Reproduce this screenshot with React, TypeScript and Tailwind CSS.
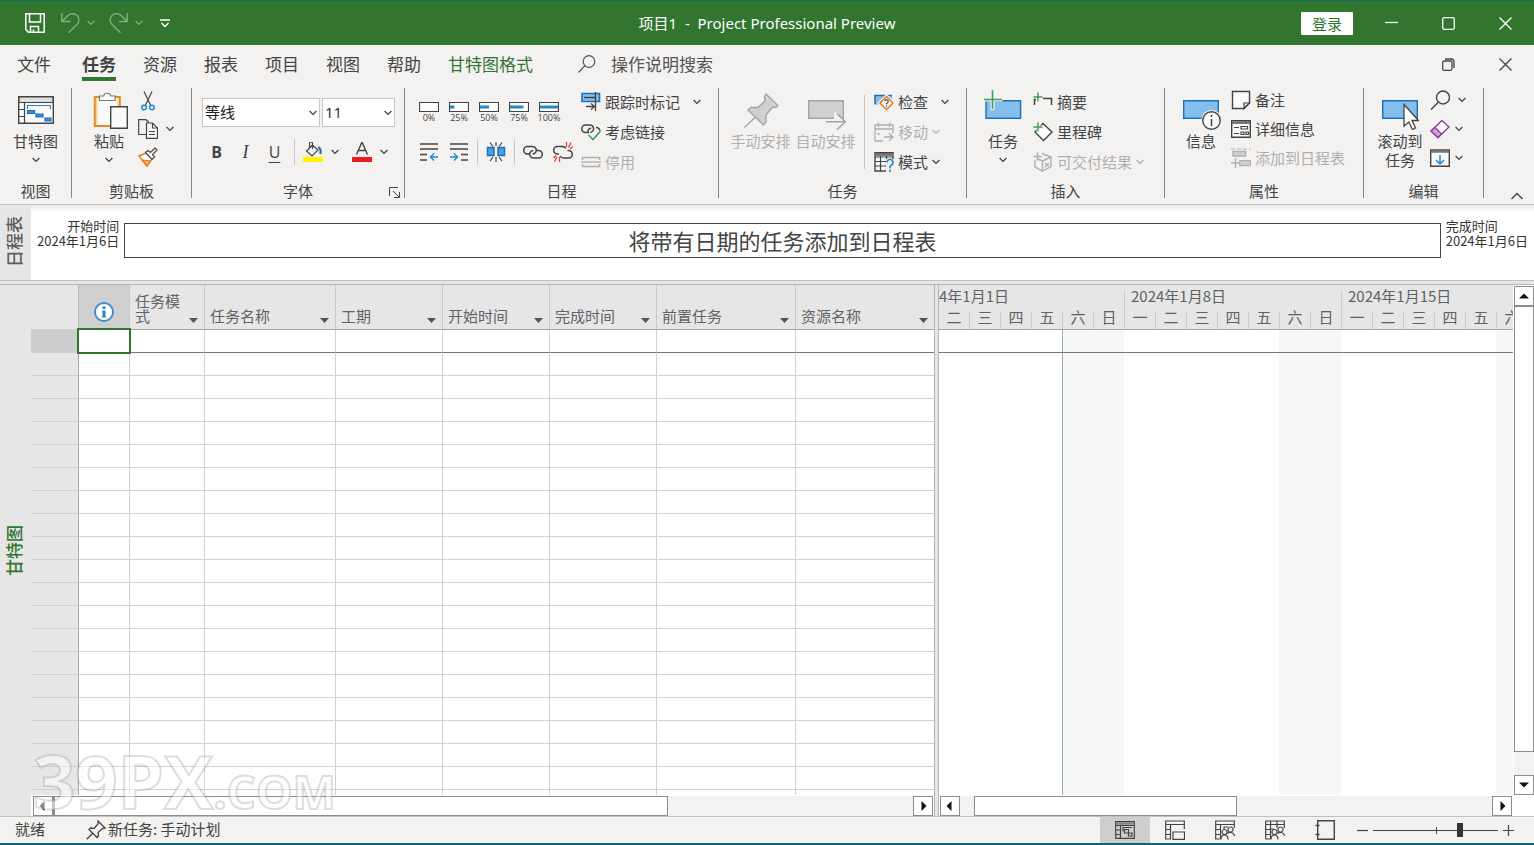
import { useState } from "react";
import type { ReactNode } from "react";

const COLUMNS = [
  { name: "任务模式", width: "w-[75px]" },
  { name: "任务名称", width: "w-[131px]" },
  { name: "工期", width: "w-[107px]" },
  { name: "开始时间", width: "w-[107px]" },
  { name: "完成时间", width: "w-[107px]" },
  { name: "前置任务", width: "w-[139px]" },
  { name: "资源名称", width: "w-[139px]" },
];
const ROWS = Array.from({ length: 60 }, (_, i) => i);
const DAYS = ["一", "二", "三", "四", "五", "六", "日"];
const WEEKS = ["2024年1月1日", "2024年1月8日", "2024年1月15日", "2024年1月22日", "2024年1月29日", "2024年2月5日"];

/* ---------- small shared pieces ---------- */

function Chevron({ className = "" }: { className?: string }) {
  return (
    <svg className={`shrink-0 ${className}`} width="8" height="6" viewBox="0 0 8 6" fill="none" stroke="currentColor" strokeWidth="1.3">
      <path d="M.6 1 4 4.4 7.400 1" />
    </svg>
  );
}

function Group({ label, width, children, launcher }: { label: string; width: string; children: ReactNode; launcher?: boolean }) {
  return (
    <section aria-label={label} className={`flex h-[110px] shrink-0 flex-col border-r border-[#8a8886] ${width}`}>
      <div className="flex flex-1 items-start">{children}</div>
      <div className="relative h-4 text-center leading-[18px]">
        {label}
        {launcher && (
          <button aria-label="字体设置" className="absolute right-1 bottom-0 flex">
            <svg width="11" height="11" viewBox="0 0 11 11" fill="none" stroke="#444">
              <path d="M.5 9V.5H9M4 4l6 6M10.500 5v5.500H5" />
            </svg>
          </button>
        )}
      </div>
    </section>
  );
}

function Large({ icon, label, chevron, disabled, className = "" }: { icon: ReactNode; label: ReactNode; chevron?: boolean; disabled?: boolean; className?: string }) {
  return (
    <button disabled={disabled} className={`flex shrink-0 flex-col items-center pt-0.5 leading-[19px] disabled:text-[#b1afad] ${className}`}>
      <span className="mb-px flex h-10 items-center justify-center">{icon}</span>
      <span>{label}</span>
      {chevron && <Chevron className="mt-[7px]" />}
    </button>
  );
}

function Small({ icon, label, chevron = "", disabled }: { icon: ReactNode; label?: string; chevron?: string; disabled?: boolean }) {
  return (
    <button disabled={disabled} aria-label={label} className="flex h-5 items-center leading-5 whitespace-nowrap disabled:text-[#b1afad]">
      {icon}
      {label && <span className="ml-1">{label}</span>}
      {chevron && <Chevron className={chevron} />}
    </button>
  );
}

function Divider({ className = "" }: { className?: string }) {
  return <span className={`w-px shrink-0 bg-[#c8c6c4] ${className}`} />;
}

function S({ children, w = 20, h = 20 }: { children: ReactNode; w?: number; h?: number }) {
  return (
    <svg className="shrink-0" width={w} height={h} viewBox={`0 0 ${w} ${h}`} fill="none" stroke="#444" strokeWidth="1.2">
      {children}
    </svg>
  );
}

/* ---------- title bar and tabs ---------- */

function TitleBar() {
  return (
    <header className="grid h-[45px] shrink-0 grid-cols-[1fr_auto_1fr] items-center border-t border-[#116a6c] bg-[#31752f] text-white">
      <div className="flex items-center pl-[25px]">
        <button aria-label="保存">
          <svg width="20" height="20" viewBox="0 0 20 20" fill="none" stroke="#fff" strokeWidth="1.5">
            <path d="M.8.8h18.400v18.400H3.500L.8 16.500zM4.500 1v8h11V1M5.500 19v-5.500h8V19M8.500 19v-2.500" />
          </svg>
        </button>
        <button aria-label="撤消" className="ml-4 text-[#7fb27d]">
          <svg width="19" height="20" viewBox="0 0 19 20" fill="none" stroke="currentColor" strokeWidth="1.4">
            <path d="M.8 0v8.500h8.500M1 8.300 7 2.500a6.300 6.300 0 0 1 9 9L7.500 19.800" />
          </svg>
        </button>
        <Chevron className="ml-[7px] text-[#7fb27d]" />
        <button aria-label="恢复" className="ml-3.5 text-[#7fb27d]">
          <svg width="19" height="20" viewBox="0 0 19 20" fill="none" stroke="currentColor" strokeWidth="1.4">
            <path d="M18.200 0v8.500H9.700M18 8.300 12 2.500a6.300 6.300 0 0 0-9 9l8.500 8.300" />
          </svg>
        </button>
        <Chevron className="ml-[7px] text-[#7fb27d]" />
        <button aria-label="自定义快速访问工具栏" className="ml-[17px]">
          <svg width="10" height="9" viewBox="0 0 10 9" fill="none" stroke="#fff" strokeWidth="1.4">
            <path d="M0 1h10M1.500 4 5 7.500 8.500 4" />
          </svg>
        </button>
      </div>
      <h1 className="font-['Noto_Sans','Noto_Sans_CJK_SC',sans-serif] text-[15px] whitespace-pre">项目1  -  Project Professional Preview</h1>
      <div className="flex items-center justify-end pr-[22px]">
        <button className="mr-8 h-[23px] w-[52px] rounded-[1px] bg-white text-[15px] leading-[23px] text-[#31752f]">登录</button>
        <button aria-label="最小化">
          <svg width="13" height="13" viewBox="0 0 13 13" fill="none" stroke="#fff" strokeWidth="1.300"><path d="M0 5.500h13" /></svg>
        </button>
        <button aria-label="最大化" className="ml-11">
          <svg width="13" height="13" viewBox="0 0 13 13" fill="none" stroke="#fff" strokeWidth="1.300"><rect x=".7" y=".7" width="11.600" height="11.600" rx="1.500" /></svg>
        </button>
        <button aria-label="关闭" className="ml-11">
          <svg width="13" height="13" viewBox="0 0 13 13" fill="none" stroke="#fff" strokeWidth="1.300"><path d="m.5.5 12 12M12.500.5l-12 12" /></svg>
        </button>
      </div>
    </header>
  );
}

function Tabs() {
  return (
    <nav className="flex h-10 shrink-0 items-center bg-[#f3f2f1] pb-0.5 pl-[17px] text-[17px] leading-6">
      <button className="mr-[31px]">文件</button>
      <div className="flex gap-[27px]">
        <button className="relative font-bold after:absolute after:inset-x-0 after:-bottom-[5px] after:h-1 after:bg-[#31752f]">任务</button>
        <button>资源</button>
        <button>报表</button>
        <button>项目</button>
        <button>视图</button>
        <button>帮助</button>
        <button className="text-[#31752f]">甘特图格式</button>
      </div>
      <label className="ml-[45px] flex items-center">
        <svg width="18" height="18" viewBox="0 0 18 18" fill="none" stroke="#555" strokeWidth="1.200"><circle cx="11" cy="6.500" r="5.800" /><path d="M7 10.700.5 17.500" /></svg>
        <input type="text" aria-label="操作说明搜索" placeholder="操作说明搜索" className="ml-[15px] w-[140px] bg-transparent outline-none placeholder:text-[#555]" />
      </label>
      <div className="ml-auto flex items-center gap-11 pr-[22px]">
        <button aria-label="还原文档窗口">
          <svg width="13" height="13" viewBox="0 0 13 13" fill="none" stroke="#444" strokeWidth="1.300"><rect x=".7" y="3" width="9.300" height="9.300" rx="1.500" /><path d="M3 1h6a3 3 0 0 1 3 3v6" /></svg>
        </button>
        <button aria-label="关闭文档">
          <svg width="13" height="13" viewBox="0 0 13 13" fill="none" stroke="#444" strokeWidth="1.300"><path d="m.5.5 12 12M12.500.5l-12 12" /></svg>
        </button>
      </div>
    </nav>
  );
}

/* ---------- ribbon icons ---------- */

const GanttIcon = (
  <S w={36} h={28}>
    <path d="M.7.7h34.600v26.600H.7z" fill="#fafafa" strokeWidth="1.400" />
    <path d="M1 1h34v5.500H1z" fill="#e1dfdd" />
    <path d="M6.500 6v21M1 13.500h5.500M1 20.500h5.500" />
    <path d="M9.500 13V9.500h23V13" stroke="#1e8bcd" />
    <path d="M9.500 14.500h7v3h-7zM18 18h7v3h-7zM27 22h6v3h-6z" stroke="#1e6fb8" fill="#3b8fd6" />
  </S>
);
const PasteIcon = (
  <S w={38} h={38}>
    <g transform="translate(3 0)">
      <path d="M1.800 6h25v29h-25z" fill="#fafafa" stroke="#e48a25" strokeWidth="2" />
      <path d="M3.700 7.500v26M25 7.500V15" stroke="#fbd28a" strokeWidth="1.500" />
      <path d="M6.500 9.500V5h4a4 4 0 0 1 7.600 0h4v4.500z" fill="#fafafa" stroke="#777" />
      <path d="M17.700 15.700h16.600v21.600H17.700z" fill="#fafafa" strokeWidth="1.400" />
    </g>
  </S>
);
const ScissorsIcon = (
  <S>
    <path d="M6 .5 12.500 14M14 .5 7.500 14" />
    <circle cx="6" cy="16.500" r="2.300" stroke="#1e8bcd" strokeWidth="1.500" />
    <circle cx="14" cy="16.500" r="2.300" stroke="#1e8bcd" strokeWidth="1.500" />
  </S>
);
const CopyIcon = (
  <S>
    <path d="M8 15.500H.7V.7H8L11 3.500" />
    <path d="M8.500 4h6l5 5v10.300h-11z" fill="#fafafa" />
    <path d="M14.500 4v5h5M11 12.500h6M11 15.500h6" />
  </S>
);
const BrushIcon = (
  <S>
    <path d="m1 9 7-3 6 6-5 7z" fill="#fff" stroke="#e07b1f" strokeWidth="1.400" />
    <path d="M4 13 12.500 14 9 19z" stroke="#e07b1f" fill="#f6b26b" />
    <path d="m7.500 5.500 2.500-2 2.500 2L17 1l2 2-4.500 4.500 2 2.500-2.500 2.500z" fill="#fafafa" />
  </S>
);
const BucketIcon = (
  <S>
    <path d="M9.500 3 3.500 9l5.500 5 6-6zM9.500 7V1.500a1.500 1.500 0 0 0-3 0V6" />
    <path d="M15 5.500c2 0 3 2 2.500 6.500" stroke="#2b6ca8" strokeWidth="2.200" />
    <path d="M0 15h20v5H0z" fill="#fff200" stroke="none" />
  </S>
);
const FontColorIcon = (
  <S>
    <path d="M4.500 12.500 9.700.8h.6l5.200 11.700M6.300 8.500h7.400" strokeWidth="1.400" />
    <path d="M0 15h20v5H0z" fill="#e81b23" stroke="none" />
  </S>
);

function ProgressIcon({ value }: { value: number }) {
  return (
    <S h={10}>
      <path d="M.5.500h19v9H.5z" fill="#fff" strokeWidth="1.200" />
      {value > 0 && <path d={`M1 5h${(value * 18) / 100}`} stroke="#1e8bcd" strokeWidth="3" />}
    </S>
  );
}

const OutdentIcon = (
  <S><path d="M1 2h18M1 7h18M1 12.500h7M1 18h7" strokeWidth="1.300" /><path d="M19 15h-7.500m3.500-3.500L11.500 15l3.500 3.500" stroke="#1e8bcd" strokeWidth="1.500" /></S>
);
const IndentIcon = (
  <S><path d="M1 2h18M1 7h18M12 12.500h7M12 18h7" strokeWidth="1.300" /><path d="M1 15h7.500M5 11.500 8.500 15 5 18.500" stroke="#1e8bcd" strokeWidth="1.500" /></S>
);
const SplitIcon = (
  <S>
    <path d="M1.500 5.500h6.500v8H1.500zM12 5.500h6.500v8H12z" fill="#4f9fdd" stroke="#1e6fb8" strokeWidth="1.500" />
    <path d="M10 0v4M10 15v5M4 .5l3 4M16 .5l-3 4M4 19l3-4M16 19l-3-4" />
  </S>
);
const LinkIcon = (
  <S>
    <path d="M6.500 12H4.500a3.800 3.800 0 0 1 0-7.600h5a3.800 3.800 0 0 1 3.200 5.800M10 15.500M13.500 8.400h2a3.800 3.800 0 0 1 0 7.600h-5a3.800 3.800 0 0 1-3.200-5.800q1-1.800 3-1.800M12.700 10.200q-1 1.800-3 1.800" strokeWidth="1.500" />
  </S>
);
const UnlinkIcon = (
  <S>
    <path d="M6 12H4.500a3.800 3.800 0 0 1 0-7.600h5a3.800 3.800 0 0 1 3.300 2M14.500 8.400h1a3.800 3.800 0 0 1 0 7.600h-5a3.800 3.800 0 0 1-3.300-2" strokeWidth="1.500" />
    <path d="M13.500 5V0M15.500 5.500 18 .5M17 7l3-2.500M6.500 15v5M4 15l-2.500 4.500M3 13.500.5 16" stroke="#e03a3e" strokeWidth="1.300" />
  </S>
);
const TrackIcon = (
  <S>
    <path d="M1 1.500h17.500v8H1z" fill="#83beec" stroke="#1e6fb8" strokeWidth="1.600" />
    <path d="M3 5.500h12M14.500 0v19M5 14.500h8M10 11.500l3.500 3-3.500 3" strokeWidth="1.300" />
  </S>
);
const LinksCheckIcon = (
  <S>
    <path d="M6 10.500H4.500a3.700 3.700 0 0 1 0-7.500h4.500a3.700 3.700 0 0 1 3.300 5.300q-1 2-3 2.200M7.500 11.500c-1.500-2.500 0-5.200 2.700-5.200M15 5.500c2 0 3.500 1.200 4 3" strokeWidth="1.500" />
    <path d="m7.500 13 4.500 4.500L19.500 9" stroke="#3ba05a" strokeWidth="1.600" />
  </S>
);
const InactiveIcon = (
  <S><path d="M1.500 8V5.500h17V8M1.500 12v2.500h17V12" stroke="#b1afad" strokeWidth="1.500" /><path d="M0 10h20" stroke="#b1afad" strokeWidth="1.400" /></S>
);
const PinLargeIcon = (
  <S w={36} h={36}>
    <path d="M23 2 35 13.500l-2 2-3.500-.5-6.500 8 0 7-2.500 3L5 18l3-2.500h7l7-6.500-.5-4.500z" fill="#d2d0ce" stroke="#a6a4a2" strokeWidth="1.400" />
    <path d="M12.500 25 1.500 35.500" stroke="#a6a4a2" strokeWidth="1.400" />
  </S>
);
const AutoIcon = (
  <S w={40} h={40}>
    <path d="M2.700 10.700h34.600v17.600H2.700z" fill="#d2d0ce" stroke="#a6a4a2" strokeWidth="1.400" />
    <path d="m29 23 10 8.700L29 40z" fill="#f3f2f1" stroke="#f3f2f1" strokeWidth="2" />
    <path d="M20 31.700h19M31 23.500l8.200 8.200-8.200 8" stroke="#a6a4a2" strokeWidth="1.500" />
  </S>
);
const InspectIcon = (
  <S>
    <path d="M1 3.500h17v7L8 12.500H1z" fill="#83beec" stroke="none" />
    <path d="M1 12.500v-9h17" stroke="#1e6fb8" strokeWidth="1.500" />
    <path d="m12.500 4.500 6.500 6.500-6.500 6.500L6 11z" fill="#fafafa" stroke="#f3f2f1" strokeWidth="4" />
    <path d="m12.500 4.500 6.500 6.500-6.500 6.500L6 11z" fill="#fafafa" stroke="#e07b1f" strokeWidth="1.500" />
    <path d="M10.800 9.200a1.700 1.700 0 1 1 2.400 1.800l-.7.700v.8M12.500 13.500v1.200" />
  </S>
);
const MoveIcon = (
  <S>
    <path d="M9 19H1V3h18v8M1 7h18M4.500.5V5M15.500.5V5M10 15h8.500M15 11l4 4-4 4" stroke="#b1afad" strokeWidth="1.300" />
    <path d="M3.500 11h2v2h-2z" fill="#b1afad" stroke="none" />
  </S>
);
const ModeIcon = (
  <S>
    <path d="M1 1h18v18H1z" fill="#fafafa" strokeWidth="1.400" />
    <path d="M1 2.500h18" stroke="#777" strokeWidth="3" /><path d="M.5.7h19M6.500 4v15M12.500 4v15M1 5h18M1 9.500h18M1 14h18" />
    <path d="M12 7h8v13h-8z" fill="#f3f2f1" stroke="none" />
    <path d="M13 10.500a3 3 0 1 1 4.500 2.500l-1.500 1.500v1.800M16 17.500V20" stroke="#1e8bcd" strokeWidth="1.600" />
  </S>
);
const TaskIcon = (
  <S w={38} h={40}>
    <path d="M2 10.700h34.600v17.600H2z" fill="#83beec" stroke="#1e6fb8" strokeWidth="1.400" />
    <path d="M8.500 0v20M0 9.500h18.500" stroke="#f3f2f1" strokeWidth="4" />
    <path d="M8.500 0v19M0 9.500h18" stroke="#3ba05a" strokeWidth="1.600" />
  </S>
);
const SummaryIcon = (
  <S><path d="M1.500 13V7.500H3M10 6.500h8.500V13" strokeWidth="1.500" /><path d="M5 .5v9M.5 5h9" stroke="#3ba05a" strokeWidth="1.400" /></S>
);
const MilestoneIcon = (
  <S><path d="m10 1.500 9 8.500-8.500 8.500L2 10z" fill="#fff" strokeWidth="1.400" /><path d="M5 0v10M0 5h10" stroke="#f3f2f1" strokeWidth="3" /><path d="M5 .5v9M.5 5h9" stroke="#3ba05a" strokeWidth="1.400" /></S>
);
const DeliverableIcon = (
  <S><path d="M9 1.500 18 5v9.500L9.500 19 2 15V8M18 5 9.500 9v10M9.500 9 5 7M12 11l4 3M12 15l4-4M4.500.5v8M.5 4.500h8" stroke="#b1afad" strokeWidth="1.400" /></S>
);
const InfoLargeIcon = (
  <S w={40} h={40}>
    <path d="M2.700 10.700h34.600v17.600H2.700z" fill="#83beec" stroke="#1e6fb8" strokeWidth="1.400" />
    <circle cx="30.500" cy="30.500" r="9.500" fill="#fafafa" stroke="#f3f2f1" strokeWidth="2" />
    <circle cx="30.500" cy="30.500" r="8.700" fill="#fafafa" strokeWidth="1.400" />
    <path d="M30.500 29v7M30.500 25v2" strokeWidth="1.500" />
  </S>
);
const NoteIcon = (
  <S><path d="M1.500 1.500h17V13l-5.500 5.500H1.500z" fill="#fafafa" strokeWidth="1.400" /><path d="M18.500 13H13v5.500z" /></S>
);
const DetailsIcon = (
  <S>
    <path d="M.7 1.700h18.600v16.600H.7z" fill="#fafafa" strokeWidth="1.400" /><path d="M1 3.500h18" stroke="#777" strokeWidth="3" />
    <path d="M3 8.500h5M3 14.500h5M10 7.500h6.500v2.500H10zM10 13h3v2.500h-3zM15 13h2.500v2.500H15z" />
  </S>
);
const AddTimelineIcon = (
  <S>
    <path d="M0 1h20" strokeDasharray="4 2" stroke="#b1afad" /><path d="M2 3.500h12.500V8H2z" fill="#d2d0ce" stroke="#b1afad" strokeWidth="1.400" />
    <path d="M4.500 10v10M0 15h9" stroke="#b1afad" strokeWidth="1.500" /><path d="M8.700 12.700h10.600v5H8.700z" fill="#d2d0ce" stroke="#b1afad" />
  </S>
);
const ScrollTaskIcon = (
  <S w={38} h={40}>
    <path d="M1.700 10.700h34.600v17.600H1.700z" fill="#83beec" stroke="#1e6fb8" strokeWidth="1.400" />
    <path d="M23 14.500v21.500l4.800-4 3.700 7.500 3-1.500-3.500-7.500h6.500z" fill="#fff" strokeWidth="1.300" />
  </S>
);
const FindIcon = <S><circle cx="13" cy="7.500" r="6.500" strokeWidth="1.400" /><path d="M8.500 12 1 19.500" strokeWidth="1.400" /></S>;
const EraserIcon = (
  <S><path d="m12 1.500 7 6.500L8 18.500 1 12z" fill="#fff" stroke="#8e3b9e" strokeWidth="1.400" /><path d="M5 8.500 11.500 15 8 18.500 1 12z" fill="#d59fdc" stroke="#8e3b9e" strokeWidth="1.400" /></S>
);
const FillIcon = (
  <S><path d="M.7 2h18.600v16.300H.7z" fill="#fafafa" strokeWidth="1.400" /><path d="M1 3.500h18" stroke="#777" strokeWidth="2.500" /><path d="M10 7v9M6 12l4 4 4-4" stroke="#1e8bcd" strokeWidth="1.500" /></S>
);

/* ---------- ribbon ---------- */

function FontSelect({ label, options, width }: { label: string; options: string[]; width: string }) {
  return (
    <div className={`relative ${width}`}>
      <select aria-label={label} className="h-[29px] w-full appearance-none border border-[#c8c6c4] bg-white pl-0.5 font-['Open_Sans','Noto_Sans_CJK_SC',sans-serif] text-[15px] text-[#222]">
        {options.map((o) => <option key={o}>{o}</option>)}
      </select>
      <Chevron className="pointer-events-none absolute top-3 right-[3px]" />
    </div>
  );
}

function Ribbon() {
  const tool = "flex h-[26px] w-[30px] items-center justify-center";
  const style = "flex h-[26px] w-[29px] items-center justify-center";
  return (
    <div className="flex h-[120px] shrink-0 border-b border-[#c8c6c4] bg-[#f3f2f1] pt-[3px] text-[15px]">
      <Group label="视图" width="w-[72px]">
        <Large className="w-[71px]" icon={GanttIcon} label="甘特图" chevron />
      </Group>
      <Group label="剪贴板" width="w-[120px]">
        <Large className="ml-3.5 w-[46px]" icon={PasteIcon} label="粘贴" chevron />
        <div className="mt-[3px] ml-1.5 flex flex-col gap-2">
          <Small icon={ScissorsIcon} />
          <Small icon={CopyIcon} chevron="ml-2" />
          <Small icon={BrushIcon} />
        </div>
      </Group>
      <Group label="字体" width="w-[213px]" launcher>
        <div className="pt-2.5 pl-2.5">
          <div className="flex gap-0.5">
            <FontSelect label="字体" options={["等线", "宋体", "黑体"]} width="w-[118px]" />
            <FontSelect label="字号" options={["11", "12", "14"]} width="w-[73px]" />
          </div>
          <div className="mt-3 flex items-center font-['Open_Sans'] text-[16px] leading-6">
            <button className={`${style} font-bold`}>B</button>
            <button className={`${style} font-['Liberation_Serif'] text-[18px] italic`}>I</button>
            <button className={`${style} underline underline-offset-4`}>U</button>
            <Divider className="mr-2 ml-[5px] h-[26px]" />
            <button aria-label="背景色" className="flex items-center">{BucketIcon}<Chevron className="ml-2" /></button>
            <button aria-label="字体颜色" className="ml-[13px] flex items-center">{FontColorIcon}<Chevron className="ml-2" /></button>
          </div>
        </div>
      </Group>
      <Group label="日程" width="w-[314px]">
        <div className="pt-3 pl-[9px]">
          <div className="flex">
            {[0, 25, 50, 75, 100].map((v) => (
              <button key={v} className="flex w-[30px] flex-col items-center pt-0.5 font-['Open_Sans'] text-[9px] leading-3">
                <ProgressIcon value={v} />
                {v}%
              </button>
            ))}
          </div>
          <div className="mt-[15px] flex items-center">
            <button aria-label="升级任务" className={tool}>{OutdentIcon}</button>
            <button aria-label="降级任务" className={tool}>{IndentIcon}</button>
            <Divider className="mx-[3px] h-[26px]" />
            <button aria-label="拆分任务" className={tool}>{SplitIcon}</button>
            <Divider className="mx-[3px] h-[26px]" />
            <button aria-label="链接任务" className={tool}>{LinkIcon}</button>
            <button aria-label="取消链接任务" className={tool}>{UnlinkIcon}</button>
          </div>
        </div>
        <div className="mt-1 ml-[3px] flex flex-col gap-2.5">
          <Small icon={TrackIcon} label="跟踪时标记" chevron="ml-[13px]" />
          <Small icon={LinksCheckIcon} label="考虑链接" />
          <Small icon={InactiveIcon} label="停用" disabled />
        </div>
      </Group>
      <Group label="任务" width="w-[248px]">
        <Large className="ml-[9px] w-[65px]" icon={PinLargeIcon} label="手动安排" disabled />
        <Large className="w-[65px]" icon={AutoIcon} label="自动安排" disabled />
        <Divider className="mt-[7px] ml-1.5 h-[74px]" />
        <div className="mt-1 ml-[9px] flex flex-col gap-2.5">
          <Small icon={InspectIcon} label="检查" chevron="ml-[13px]" />
          <Small icon={MoveIcon} label="移动" chevron="ml-1" disabled />
          <Small icon={ModeIcon} label="模式" chevron="ml-1" />
        </div>
      </Group>
      <Group label="插入" width="w-[198px]">
        <Large className="ml-3 w-12" icon={TaskIcon} label="任务" chevron />
        <div className="mt-1 ml-1.5 flex flex-col gap-2.5">
          <Small icon={SummaryIcon} label="摘要" />
          <Small icon={MilestoneIcon} label="里程碑" />
          <Small icon={DeliverableIcon} label="可交付结果" chevron="ml-1" disabled />
        </div>
      </Group>
      <Group label="属性" width="w-[199px]">
        <Large className="ml-3 w-12" icon={InfoLargeIcon} label="信息" />
        <div className="mt-0.5 ml-1.5 flex flex-col gap-[9px]">
          <Small icon={NoteIcon} label="备注" />
          <Small icon={DetailsIcon} label="详细信息" />
          <Small icon={AddTimelineIcon} label="添加到日程表" disabled />
        </div>
      </Group>
      <Group label="编辑" width="w-[120px]">
        <Large className="ml-[11px] w-[50px]" icon={ScrollTaskIcon} label={<>滚动到<br />任务</>} />
        <div className="mt-0.5 ml-[5px] flex flex-col gap-[9px]">
          <Small icon={FindIcon} chevron="ml-2" />
          <Small icon={EraserIcon} chevron="ml-[5px]" />
          <Small icon={FillIcon} chevron="ml-[5px]" />
        </div>
      </Group>
      <button aria-label="折叠功能区" className="mt-auto ml-auto pr-[11px] pb-1">
        <svg width="12" height="8" viewBox="0 0 12 8" fill="none" stroke="#444" strokeWidth="1.400"><path d="m.5 7 5.500-5.500L11.500 7" /></svg>
      </button>
    </div>
  );
}

/* ---------- views ---------- */

function SideLabel({ text, className }: { text: string; className: string }) {
  return (
    <div className={`flex w-[31px] shrink-0 justify-center bg-[#e6e6e6] pr-[3px] text-[17px] leading-[22px] font-medium ${className}`}>
      <span className="rotate-180 [text-orientation:sideways] [writing-mode:vertical-rl]">{text}</span>
    </div>
  );
}

function TimelinePane() {
  return (
    <section aria-label="日程表" className="flex h-[76px] shrink-0 border-b border-[#c0c0c0] bg-white text-[13px] leading-[15px] text-[#333]">
      <SideLabel text="日程表" className="items-start pt-[11px] text-[#5c5c5c]" />
      <div className="flex min-w-0 flex-1 items-start bg-linear-to-b from-[#ebebeb] to-white to-[8px] px-1.5">
        <div className="shrink-0 pt-[13px] text-right">开始时间<br />2024年1月6日</div>
        <div className="mx-[5px] mt-[18px] h-[35px] flex-1 border border-[#444] text-center text-[22px] leading-[32px] text-[#444]">将带有日期的任务添加到日程表</div>
        <div className="shrink-0 pt-[13px]">完成时间<br />2024年1月6日</div>
      </div>
    </section>
  );
}

function ArrowButton({ dir, label }: { dir: "left" | "right" | "up" | "down"; label: string }) {
  const d = {
    left: "M6.500 0v10L1.500 5z",
    right: "M3.500 0v10L8.500 5z",
    up: "M0 7.500h10L5 2.500z",
    down: "M0 2.500h10L5 7.500z",
  }[dir];
  return (
    <button aria-label={label} className="flex h-5 w-5 shrink-0 items-center justify-center border border-[#8c8c8c] bg-white">
      <svg width="10" height="10" viewBox="0 0 10 10" fill="#111"><path d={d} /></svg>
    </button>
  );
}

function HorizontalBar({ children, className }: { children: ReactNode; className: string }) {
  return (
    <div className={`flex h-[21px] shrink-0 bg-white pt-px ${className}`}>
      <ArrowButton dir="left" label="向左滚动" />
      <div className="flex flex-1 bg-[#f2f2f2]">{children}</div>
      <ArrowButton dir="right" label="向右滚动" />
    </div>
  );
}

function TaskTable() {
  const line = "border-r border-b border-[#d0d0d0]";
  return (
    <div className="flex w-[904px] shrink-0 flex-col border-r border-[#b4b4b4]">
      <div className="min-h-0 flex-1 overflow-hidden">
        <table className="w-[904px] table-fixed border-separate border-spacing-0 text-[15px] leading-[15px] text-[#5f6368]">
          <colgroup>
            <col className="w-12" />
            <col className="w-[51px]" />
            {COLUMNS.map((c) => <col key={c.name} className={c.width} />)}
          </colgroup>
          <thead>
            <tr className="h-[45px] bg-[#e6e6e6]">
              <th aria-label="行" className="border-r border-b border-[#b4b4b4] border-b-[#d0d0d0] p-0" />
              <th aria-label="标记" className="border-r border-b border-[#c8c8c8] border-b-[#a6a6a6] bg-[#d0d0d0] p-0 align-bottom">
                <svg className="mx-auto mb-[7px]" width="20" height="20" viewBox="0 0 20 20">
                  <circle cx="10" cy="10" r="9" fill="#fff" stroke="#3a8dcb" strokeWidth="1.800" />
                  <path d="M8.500 4.500h3v2.500h-3zM8 8.500h3.500v6H12.500v1H7.500v-1h1V9.500H8z" fill="#2e84c6" />
                </svg>
              </th>
              {COLUMNS.map((c) => (
                <th key={c.name} className="border-r border-b border-[#c8c8c8] border-b-[#a6a6a6] p-0 align-bottom font-normal">
                  <div className="flex items-end justify-between pr-1.5 pb-1.5 pl-[5px] text-left">
                    <span className="min-w-0 flex-1 break-all">{c.name}</span>
                    <svg width="9" height="5" viewBox="0 0 9 5" fill="#555"><path d="M0 0h9L4.500 5z" /></svg>
                  </div>
                </th>
              ))}
            </tr>
          </thead>
          <tbody>
            {ROWS.map((r) => (
              <tr key={r} className="h-[23px]">
                <th className={`border-r border-b border-[#d0d0d0] border-r-[#a6a6a6] p-0 ${r === 0 ? "bg-[#cdcdcd]" : "bg-[#e6e6e6]"}`} />
                <td className={`p-0 ${line} ${r === 0 ? "relative border-b-[#777]" : ""}`}>
                  {r === 0 && <span className="absolute -inset-[2px] border-2 border-[#31752f]" />}
                </td>
                {COLUMNS.map((c) => <td key={c.name} className={`p-0 ${line} ${r === 0 ? "border-b-[#777]" : ""}`} />)}
              </tr>
            ))}
          </tbody>
        </table>
      </div>
      <HorizontalBar className="pr-px pl-0.5">
        <div className="w-[71.5%] border border-l-2 border-[#8c8c8c] bg-white" />
      </HorizontalBar>
    </div>
  );
}

function dayStyle(day: number, week: number) {
  if (day === 6) return "border-transparent bg-[#f7f7f7] bg-clip-padding";
  if (day === 5) return "border-[#f7f7f7] bg-[#f7f7f7]";
  if (day === 4) return week === 0 ? "border-[#8fbb8d]" : "border-[#f7f7f7]";
  return "border-transparent";
}

function DayStripes({ className }: { className: string }) {
  return (
    <div className={`flex overflow-hidden ${className}`}>
      {WEEKS.map((w, wi) => (
        <div key={w} className="flex w-[217px] shrink-0 first:-ml-[31px]">
          {DAYS.map((d, i) => <div key={d} className={`w-[31px] border-r ${dayStyle(i, wi)}`} />)}
        </div>
      ))}
    </div>
  );
}

function GanttChart() {
  return (
    <div className="flex min-w-0 flex-1 flex-col border-l border-[#b4b4b4]">
      <div className="flex h-[45px] shrink-0 overflow-hidden border-b border-[#a6a6a6] bg-[#e6e6e6] text-[15px] text-[#5f6368]">
        {WEEKS.map((w) => (
          <div key={w} className="w-[217px] shrink-0 first:-ml-[31px]">
            <div className="mt-[5px] h-[21px] border-r border-[#cccccc] pl-1.5 leading-3">{w}</div>
            <div className="flex h-[18px]">
              {DAYS.map((d) => (
                <div key={d} className="w-[31px] border-r border-[#cccccc] text-center leading-3">{d}</div>
              ))}
            </div>
          </div>
        ))}
      </div>
      <DayStripes className="h-[23px] shrink-0 border-b border-[#777]" />
      <DayStripes className="min-h-0 flex-1" />
      <HorizontalBar className="px-px">
        <div className="ml-[14px] w-[49.5%] border border-[#8c8c8c] bg-white" />
      </HorizontalBar>
    </div>
  );
}

/* ---------- status bar ---------- */

const TABLE_FRAME = "M19.300 8V1H.7v18H5M.7 4.500h18.600M5.500 4.500V19M.7 9.500h5M.7 14.500h5";
const PEOPLE = "M9.500 9.500a2.500 2.500 0 1 0 .01 0M6 19.500c0-6 7-6 7 0M15.500 7a2.500 2.500 0 1 0 .01 0M12.500 13.500c2-2 6.500-1.500 7 2.500";
const VIEWS = [
  { name: "甘特图", icon: <S><path d="M.7 1.700h18.600v16.600H.7z" /><path d="M1 3.500h18" stroke="#888" strokeWidth="2.500" /><path d="M.7 5.500h18.600M5.500 5.500v13M.7 10h5M.7 14.500h5M8 11.500V7.500h9M9.500 9.500h4v3.500h-4zM13.500 13h3.500v3h-3.500z" /></S> },
  { name: "任务分配状况", icon: <S><path d="M19.300 9V1H.7v18H6M.7 4.500h18.600M5.500 4.500V19M.7 9.500h5M.7 14.500h5M8 12h11.500v7.300H8z" /></S> },
  { name: "工作组规划器", icon: <S><path d={TABLE_FRAME} /><path d="M9 9V7h4" /><path d={PEOPLE} /></S> },
  { name: "资源工作表", icon: <S><path d={TABLE_FRAME} /><path d="M5.500 1v4M12 1v7M6 9h3" /><path d={PEOPLE} /></S> },
  { name: "报表", icon: <S><path d="M2.700.7h16.600v18.600H2.700zM.5 5.500h4M.5 14.500h4" strokeWidth="1.400" /></S> },
];

function StatusBar() {
  const [zoom, setZoom] = useState(71);
  return (
    <footer className="flex h-[29px] shrink-0 border-t border-b-2 border-t-[#c0c0c0] border-b-[#0f6376] bg-[#f3f2f1] text-[15px] leading-6">
      <span className="pl-[15px]">就绪</span>
      <button className="ml-[41px] flex items-start">
        <span className="mt-[3px]">
          <S><path d="m12 1 7 7-2.500.500-4.500 4 .500 3.500-1.500 1.500-8-8L4.500 8l3.500.5 4-4.500zM6.500 13.500.7 19.300" strokeWidth="1.300" /></S>
        </span>
        <span className="ml-0.5">新任务: 手动计划</span>
      </button>
      <div className="ml-auto flex">
        {VIEWS.map((v, i) => (
          <button key={v.name} aria-label={v.name} className={`flex w-[50px] items-center justify-center ${i === 0 ? "bg-[#d0cecc]" : ""}`}>{v.icon}</button>
        ))}
      </div>
      <div className="flex items-center pr-5 pl-[7px]">
        <button aria-label="缩小"><S w={11} h={11}><path d="M0 5.500h11" /></S></button>
        <div className="relative mx-[5px] flex h-[26px] w-[125px] items-center">
          <span className="absolute left-1/2 h-[7px] w-px bg-[#444]" />
          <input
            type="range"
            aria-label="显示比例"
            value={zoom}
            onChange={(e) => setZoom(Number(e.target.value))}
            className="relative h-px w-full appearance-none bg-[#444] [&::-webkit-slider-thumb]:h-3.5 [&::-webkit-slider-thumb]:w-1.5 [&::-webkit-slider-thumb]:appearance-none [&::-webkit-slider-thumb]:bg-[#333]"
          />
        </div>
        <button aria-label="放大"><S w={11} h={11}><path d="M0 5.500h11M5.500 0v11" /></S></button>
      </div>
    </footer>
  );
}

export default function App() {
  return (
    <div className="relative flex h-screen flex-col overflow-hidden bg-[#e6e6e6] font-['Noto_Sans_CJK_SC',sans-serif] text-[#444]">
      <TitleBar />
      <Tabs />
      <Ribbon />
      <TimelinePane />
      <main className="mt-[3px] flex min-h-0 flex-1 border-t border-[#b4b4b4] bg-white">
        <SideLabel text="甘特图" className="items-center text-[#31752f]" />
        <TaskTable />
        <div className="w-[3px] shrink-0 bg-[#e6e6e6]" />
        <GanttChart />
        <div className="flex w-[21px] shrink-0 flex-col bg-white pt-px pb-[21px] pl-px">
          <ArrowButton dir="up" label="向上滚动" />
          <div className="flex-1 bg-[#f2f2f2]">
            <div className="h-[95%] w-5 border border-[#8c8c8c] bg-white" />
          </div>
          <ArrowButton dir="down" label="向下滚动" />
        </div>
      </main>
      <StatusBar />
      <div className="pointer-events-none absolute bottom-[29px] left-[33px] font-['Open_Sans'] text-[74px] leading-[50px] font-bold whitespace-nowrap text-white/50 [-webkit-text-stroke:2px_rgb(120_120_120/0.25)]">
        39PX<span className="text-[46px]">.COM</span>
      </div>
    </div>
  );
}
